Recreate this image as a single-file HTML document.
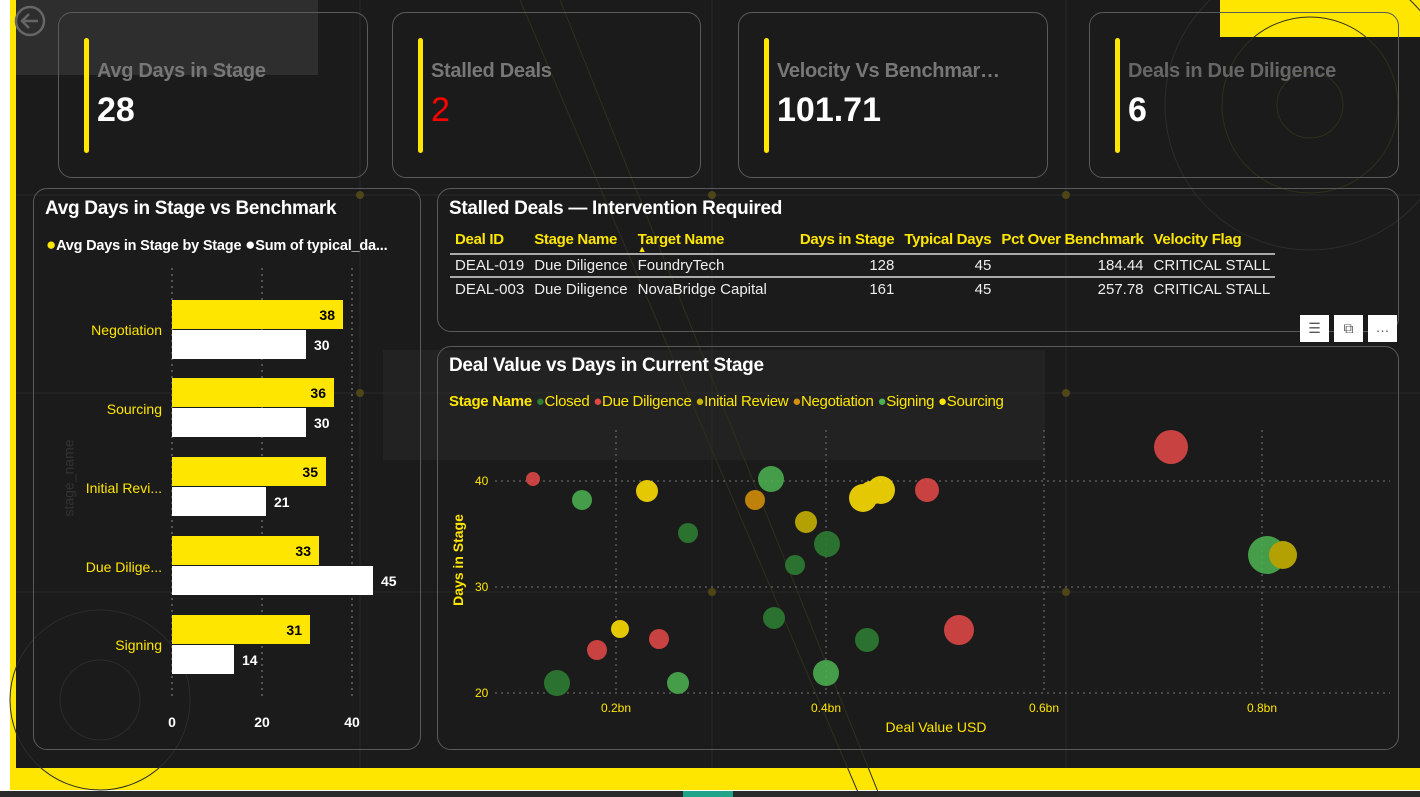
<!DOCTYPE html>
<html><head><meta charset="utf-8"><style>
*{margin:0;padding:0;box-sizing:border-box}
body{width:1420px;height:797px;background:#fff;position:relative;overflow:hidden;font-family:"Liberation Sans",sans-serif}
.abs{position:absolute}
.panel{position:absolute;border:1px solid #5a5a5a;border-radius:14px}
.kpi .bar{position:absolute;left:25px;top:25px;width:5px;height:115px;background:#ffe600;border-radius:3px}
.kpi .lbl{position:absolute;left:38px;top:47px;font-size:20px;font-weight:bold;color:#777;white-space:nowrap;letter-spacing:-0.3px}
.kpi .val{position:absolute;left:38px;top:78px;font-size:34px;font-weight:bold;color:#fff}
.title{position:absolute;font-size:19px;font-weight:bold;color:#fff;letter-spacing:-0.3px}
table{border-collapse:collapse;font-size:15px}
th{color:#ffe600;font-weight:bold;text-align:left;padding:0 5px;height:28px;white-space:nowrap;letter-spacing:-0.3px}
td{color:#eee;padding:0 5px;height:23px;white-space:nowrap}
.r{text-align:right}
</style></head><body>
<div class="abs" style="left:10px;top:0;width:1410px;height:790px;background:#ffe600"></div>
<div class="abs" style="left:16px;top:0;width:1404px;height:768px;background:#1b1b1b"></div>
<div class="abs" style="left:0;top:791px;width:1420px;height:6px;background:#2a2a2a"></div>
<div class="abs" style="left:683px;top:791px;width:50px;height:6px;background:#1fa389"></div>
<div class="abs" style="left:16px;top:0;width:302px;height:75px;background:#2e2e2e"></div>
<div class="abs" style="left:383px;top:350px;width:662px;height:110px;background:#222"></div>
<div class="abs" style="left:1220px;top:0;width:200px;height:37px;background:#ffe600"></div>
<svg class="abs" style="left:0;top:0" width="1420" height="797">
<g stroke="#2a2a2a" stroke-width="1">
<line x1="360" y1="0" x2="360" y2="768"/><line x1="712" y1="0" x2="712" y2="768"/><line x1="1066" y1="0" x2="1066" y2="768"/>
<line x1="16" y1="195" x2="1420" y2="195"/><line x1="16" y1="393" x2="1420" y2="393"/><line x1="16" y1="592" x2="1420" y2="592"/>
</g>
<g fill="#4f4618"><circle cx="360" cy="195" r="4"/><circle cx="712" cy="195" r="4"/><circle cx="1066" cy="195" r="4"/><circle cx="360" cy="393" r="4"/><circle cx="1066" cy="393" r="4"/><circle cx="712" cy="592" r="4"/><circle cx="1066" cy="592" r="4"/></g>
<g fill="none" stroke="#2f2f1c"><circle cx="1310" cy="105" r="88"/><circle cx="1310" cy="105" r="33"/><line x1="560" y1="0" x2="880" y2="797"/><line x1="520" y1="0" x2="860" y2="797"/></g>
<g fill="none" stroke="#2c2c2c"><circle cx="100" cy="700" r="90"/><circle cx="100" cy="700" r="40"/><circle cx="1310" cy="105" r="145"/></g>
<circle cx="30" cy="21" r="14" fill="none" stroke="#666" stroke-width="2.5"/>
<path d="M38 21H22M29 14l-7 7 7 7" fill="none" stroke="#666" stroke-width="2.5"/>
</svg>

<div class="panel kpi" style="left:58px;top:12px;width:310px;height:166px"><div class="bar"></div><div class="lbl">Avg Days in Stage</div><div class="val">28</div></div>
<div class="panel kpi" style="left:392px;top:12px;width:309px;height:166px"><div class="bar"></div><div class="lbl">Stalled Deals</div><div class="val" style="color:#f00;font-weight:normal">2</div></div>
<div class="panel kpi" style="left:738px;top:12px;width:310px;height:166px"><div class="bar"></div><div class="lbl">Velocity Vs Benchmar…</div><div class="val">101.71</div></div>
<div class="panel kpi" style="left:1089px;top:12px;width:310px;height:166px"><div class="bar"></div><div class="lbl" style="color:#666">Deals in Due Diligence</div><div class="val">6</div></div>

<!-- Bar chart -->
<div class="panel" style="left:33px;top:188px;width:388px;height:562px"></div>
<div class="title" style="left:45px;top:198px">Avg Days in Stage vs Benchmark</div>
<div class="abs" style="left:46px;top:235px;font-size:14.5px;font-weight:bold;color:#fff;white-space:nowrap;letter-spacing:-0.2px"><span style="color:#ffe600;font-size:17px">●</span>Avg Days in Stage by Stage <span style="font-size:17px">●</span>Sum of typical_da...</div>
<div class="abs" style="left:30px;top:470px;transform:rotate(-90deg);font-size:14px;color:#333">stage_name</div>
<svg class="abs" style="left:33px;top:188px" width="388" height="562" font-family="Liberation Sans">
<g stroke="#888" stroke-dasharray="2,4"><line x1="139" y1="80" x2="139" y2="512"/><line x1="229" y1="80" x2="229" y2="512"/><line x1="319" y1="80" x2="319" y2="512"/></g>
<g font-size="14" fill="#ffe600" text-anchor="end">
<text x="129" y="147">Negotiation</text><text x="129" y="226">Sourcing</text><text x="129" y="305">Initial Revi...</text><text x="129" y="384">Due Dilige...</text><text x="129" y="462">Signing</text></g>
<g font-size="14" font-weight="bold">
<rect x="139" y="112" width="171" height="29" fill="#ffe600"/><text x="302" y="132" text-anchor="end">38</text>
<rect x="139" y="142" width="134" height="29" fill="#fff"/><text x="281" y="162" fill="#fff">30</text>
<rect x="139" y="190" width="162" height="29" fill="#ffe600"/><text x="293" y="210" text-anchor="end">36</text>
<rect x="139" y="220" width="134" height="29" fill="#fff"/><text x="281" y="240" fill="#fff">30</text>
<rect x="139" y="269" width="154" height="29" fill="#ffe600"/><text x="285" y="289" text-anchor="end">35</text>
<rect x="139" y="299" width="94" height="29" fill="#fff"/><text x="241" y="319" fill="#fff">21</text>
<rect x="139" y="348" width="147" height="29" fill="#ffe600"/><text x="278" y="368" text-anchor="end">33</text>
<rect x="139" y="378" width="201" height="29" fill="#fff"/><text x="348" y="398" fill="#fff">45</text>
<rect x="139" y="427" width="138" height="29" fill="#ffe600"/><text x="269" y="447" text-anchor="end">31</text>
<rect x="139" y="457" width="62" height="29" fill="#fff"/><text x="209" y="477" fill="#fff">14</text>
<g fill="#fff" text-anchor="middle"><text x="139" y="539">0</text><text x="229" y="539">20</text><text x="319" y="539">40</text></g>
</g></svg>

<!-- Table -->
<div class="panel" style="left:437px;top:188px;width:962px;height:144px"></div>
<div class="title" style="left:449px;top:198px">Stalled Deals — Intervention Required</div>
<table class="abs" style="left:450px;top:226px">
<tr style="border-bottom:2px solid #aaa"><th>Deal ID</th><th>Stage Name</th><th style="position:relative">Target Name<span style="position:absolute;left:5px;top:18px;font-size:9px">▲</span></th><th style="padding-left:28px">Days in Stage</th><th>Typical Days</th><th>Pct Over Benchmark</th><th style="padding-right:12px">Velocity Flag</th></tr>
<tr style="border-bottom:2px solid #aaa"><td>DEAL-019</td><td>Due Diligence</td><td>FoundryTech</td><td class="r">128</td><td class="r">45</td><td class="r">184.44</td><td>CRITICAL STALL</td></tr>
<tr><td>DEAL-003</td><td>Due Diligence</td><td>NovaBridge Capital</td><td class="r">161</td><td class="r">45</td><td class="r">257.78</td><td>CRITICAL STALL</td></tr>
</table>
<div class="abs" style="left:1300px;top:315px;width:29px;height:27px;background:#fff;color:#555;font-size:14px;text-align:center;line-height:27px">☰</div>
<div class="abs" style="left:1334px;top:315px;width:29px;height:27px;background:#fff;color:#555;font-size:14px;text-align:center;line-height:27px">⧉</div>
<div class="abs" style="left:1368px;top:315px;width:29px;height:27px;background:#fff;color:#555;font-size:14px;text-align:center;line-height:24px">…</div>

<!-- Scatter -->
<div class="panel" style="left:437px;top:346px;width:962px;height:404px"></div>
<div class="title" style="left:449px;top:355px">Deal Value vs Days in Current Stage</div>
<div class="abs" style="left:449px;top:393px;font-size:15px;color:#ffe600;white-space:nowrap;letter-spacing:-0.3px"><b>Stage Name</b> <span style="color:#2e7d32">●</span>Closed <span style="color:#e04848">●</span>Due Diligence <span style="color:#c8b400">●</span>Initial Review <span style="color:#d4900a">●</span>Negotiation <span style="color:#4caf50">●</span>Signing <span style="color:#ffe600">●</span>Sourcing</div>
<svg class="abs" style="left:0;top:0" width="1420" height="797" font-family="Liberation Sans">
<g stroke="#777" stroke-dasharray="2,4"><line x1="616" y1="430" x2="616" y2="693"/><line x1="826" y1="430" x2="826" y2="693"/><line x1="1044" y1="430" x2="1044" y2="693"/><line x1="1262" y1="430" x2="1262" y2="693"/>
<line x1="495" y1="481" x2="1390" y2="481"/><line x1="495" y1="587" x2="1390" y2="587"/><line x1="495" y1="693" x2="1390" y2="693"/></g>
<g fill="#ffe600" font-size="12"><text x="475" y="485">40</text><text x="475" y="591">30</text><text x="475" y="697">20</text>
<g text-anchor="middle"><text x="616" y="712">0.2bn</text><text x="826" y="712">0.4bn</text><text x="1044" y="712">0.6bn</text><text x="1262" y="712">0.8bn</text></g>
<text x="936" y="732" font-size="14" text-anchor="middle">Deal Value USD</text>
<text x="463" y="560" font-size="14" font-weight="bold" transform="rotate(-90 463 560)" text-anchor="middle">Days in Stage</text></g>
<g opacity="0.88">
<circle cx="533" cy="479" r="7" fill="#e04848"/><circle cx="582" cy="500" r="10" fill="#4caf50"/><circle cx="647" cy="491" r="11" fill="#ffe000"/>
<circle cx="688" cy="533" r="10" fill="#2e7d32"/><circle cx="755" cy="500" r="10" fill="#d4900a"/><circle cx="771" cy="479" r="13" fill="#4caf50"/>
<circle cx="806" cy="522" r="11" fill="#c8b400"/><circle cx="827" cy="544" r="13" fill="#2e7d32"/><circle cx="795" cy="565" r="10" fill="#2e7d32"/>
<circle cx="863" cy="498" r="14" fill="#ffe000"/><circle cx="871" cy="493" r="12" fill="#ffe000"/><circle cx="881" cy="490" r="14" fill="#ffe000"/>
<circle cx="927" cy="490" r="12" fill="#e04848"/><circle cx="1171" cy="447" r="17" fill="#e04848"/><circle cx="1267" cy="555" r="19" fill="#4caf50"/>
<circle cx="1283" cy="555" r="14" fill="#c8b400"/><circle cx="959" cy="630" r="15" fill="#e04848"/><circle cx="867" cy="640" r="12" fill="#2e7d32"/>
<circle cx="774" cy="618" r="11" fill="#2e7d32"/><circle cx="659" cy="639" r="10" fill="#e04848"/><circle cx="620" cy="629" r="9" fill="#ffe000"/>
<circle cx="597" cy="650" r="10" fill="#e04848"/><circle cx="557" cy="683" r="13" fill="#2e7d32"/><circle cx="678" cy="683" r="11" fill="#4caf50"/>
<circle cx="826" cy="673" r="13" fill="#4caf50"/></g>
</svg>
</body></html>
